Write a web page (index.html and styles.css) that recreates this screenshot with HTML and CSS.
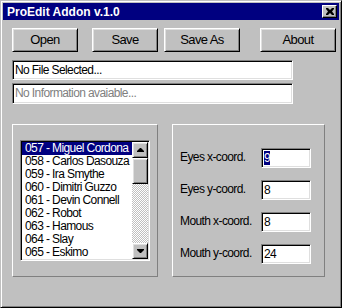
FILE: index.html
```html
<!DOCTYPE html>
<html>
<head>
    <title>ProEdit Addon v.1.0</title>
    <meta name="viewport" content="width=device-width, initial-scale=1">
    <link rel="stylesheet" href="styles.css">
</head>
<body>
    <div class="window">
        <div class="title-bar">
            <span class="title-text">ProEdit Addon v.1.0</span>
            <div class="close-btn">
                <svg width="8" height="7" viewBox="0 0 8 7"><path d="M0 0h2l2 2 2-2h2v1L6 3.5 8 6v1H6L4 5 2 7H0V6l2-2.5L0 1z" fill="#000"/></svg>
            </div>
        </div>

        <div class="toolbar">
            <div class="btn btn-open">Open</div>
            <div class="btn btn-save">Save</div>
            <div class="btn btn-saveas">Save As</div>
            <div class="btn btn-about">About</div>
        </div>

        <div class="field field-file">No File Selected...</div>
        <div class="field field-info">No Information avaiable...</div>

        <div class="groups">
            <div class="group group-list">
                <div class="listbox">
                    <div class="list-items">
                        <div class="list-item selected">057 - Miguel Cordona</div>
                        <div class="list-item">058 - Carlos Dasouza</div>
                        <div class="list-item">059 - Ira Smythe</div>
                        <div class="list-item">060 - Dimitri Guzzo</div>
                        <div class="list-item">061 - Devin Connell</div>
                        <div class="list-item">062 - Robot</div>
                        <div class="list-item">063 - Hamous</div>
                        <div class="list-item">064 - Slay</div>
                        <div class="list-item">065 - Eskimo</div>
                    </div>
                    <div class="scrollbar">
                        <div class="sb-btn">
                            <svg width="7" height="4" viewBox="0 0 7 4"><path d="M3 0h1l3 3v1H0V3z" fill="#000"/></svg>
                        </div>
                        <div class="sb-thumb"></div>
                        <div class="sb-track"></div>
                        <div class="sb-btn">
                            <svg width="7" height="4" viewBox="0 0 7 4"><path d="M0 0h7v1L4 4H3L0 1z" fill="#000"/></svg>
                        </div>
                    </div>
                </div>
            </div>

            <div class="group group-coords">
                <div class="coord-row">
                    <span class="coord-label">Eyes x-coord.</span>
                    <div class="coord-input"><span class="sel">9</span></div>
                </div>
                <div class="coord-row">
                    <span class="coord-label">Eyes y-coord.</span>
                    <div class="coord-input">8</div>
                </div>
                <div class="coord-row">
                    <span class="coord-label">Mouth x-coord.</span>
                    <div class="coord-input">8</div>
                </div>
                <div class="coord-row">
                    <span class="coord-label">Mouth y-coord.</span>
                    <div class="coord-input">24</div>
                </div>
            </div>
        </div>
    </div>
</body>
</html>
```

FILE: styles.css
```css
html, body {
    margin: 0;
    padding: 0;
}
body {
    width: 342px;
    height: 308px;
    overflow: hidden;
    background: #c0c0c0;
    font-family: "Liberation Sans", Arial, sans-serif;
    font-size: 12px;
    letter-spacing: -0.6px;
    color: #000;
}
.window {
    box-sizing: border-box;
    width: 342px;
    height: 308px;
    background: #c0c0c0;
    border: 1px solid;
    border-color: #c0c0c0 #000 #000 #c0c0c0;
    box-shadow: inset 1px 1px 0 #fff, inset -1px -1px 0 #808080;
    padding: 2px;
}
.title-bar {
    height: 17px;
    background: #000080;
    display: flex;
    align-items: center;
    justify-content: space-between;
    padding: 0 2px 0 4px;
}
.title-text {
    font-weight: bold;
    font-size: 12px;
    letter-spacing: 0;
    color: #fff;
}
.close-btn {
    box-sizing: border-box;
    width: 15px;
    height: 13px;
    background: #c0c0c0;
    border: 1px solid;
    border-color: #fff #000 #000 #fff;
    box-shadow: inset -1px -1px 0 #808080;
    display: flex;
    align-items: center;
    justify-content: center;
}

/* raised 3d look shared by buttons */
.btn, .sb-btn, .sb-thumb {
    box-sizing: border-box;
    background: #c0c0c0;
    border: 1px solid;
    border-color: #fff #000 #000 #fff;
    box-shadow: inset 1px 1px 0 #dfdfdf, inset -1px -1px 0 #808080;
}
.toolbar {
    display: flex;
    margin-top: 8px;
    padding-left: 9px;
}
.btn {
    height: 24px;
    display: flex;
    align-items: center;
    justify-content: center;
    padding-bottom: 1px;
    font-size: 13px;
}
.btn-open { width: 66px; }
.btn-save { width: 66px; margin-left: 14px; }
.btn-saveas { width: 76px; margin-left: 6px; }
.btn-about { width: 76px; margin-left: 20px; }

/* sunken 3d look shared by fields */
.field, .listbox, .coord-input {
    box-sizing: border-box;
    background: #fff;
    border: 1px solid;
    border-color: #808080 #fff #fff #808080;
    box-shadow: inset 1px 1px 0 #000, inset -1px -1px 0 #dfdfdf;
}
.field {
    width: 281px;
    height: 20px;
    margin-left: 9px;
    padding: 0 2px;
    line-height: 18px;
    white-space: nowrap;
}
.field-file { margin-top: 8px; }
.field-info { margin-top: 3px; height: 21px; color: #808080; }

.groups {
    display: flex;
    gap: 14px;
    margin-top: 20px;
    padding-left: 9px;
}
.group {
    box-sizing: border-box;
    height: 153px;
    border: 1px solid;
    border-color: #fff #808080 #808080 #fff;
}
.group-list {
    width: 146px;
    padding: 15px 0 0 7px;
}
.group-coords {
    width: 153px;
    padding: 23px 0 0 7px;
    display: flex;
    flex-direction: column;
    gap: 12px;
}

.listbox {
    width: 130px;
    height: 121px;
    padding: 1px;
    display: flex;
    overflow: hidden;
}
.list-items {
    flex: 1;
    overflow: hidden;
}
.list-item {
    height: 13px;
    line-height: 13px;
    padding-left: 3px;
    white-space: nowrap;
}
.list-item.selected {
    background: #000080;
    color: #fff;
}
.scrollbar {
    width: 16px;
    display: flex;
    flex-direction: column;
}
.sb-btn {
    height: 16px;
    display: flex;
    align-items: center;
    justify-content: center;
}
.sb-thumb {
    height: 26px;
}
.sb-track {
    flex: 1;
    background-image: conic-gradient(#c0c0c0 25%, #fff 0 50%, #c0c0c0 0 75%, #fff 0);
    background-size: 2px 2px;
}

.coord-row {
    display: flex;
    align-items: center;
    height: 20px;
}
.coord-label {
    width: 81px;
    padding-bottom: 3px;
    white-space: nowrap;
}
.coord-input {
    width: 50px;
    height: 20px;
    padding: 0 2px;
    line-height: 18px;
}
.coord-input .sel {
    background: #000080;
    color: #fff;
}
```
